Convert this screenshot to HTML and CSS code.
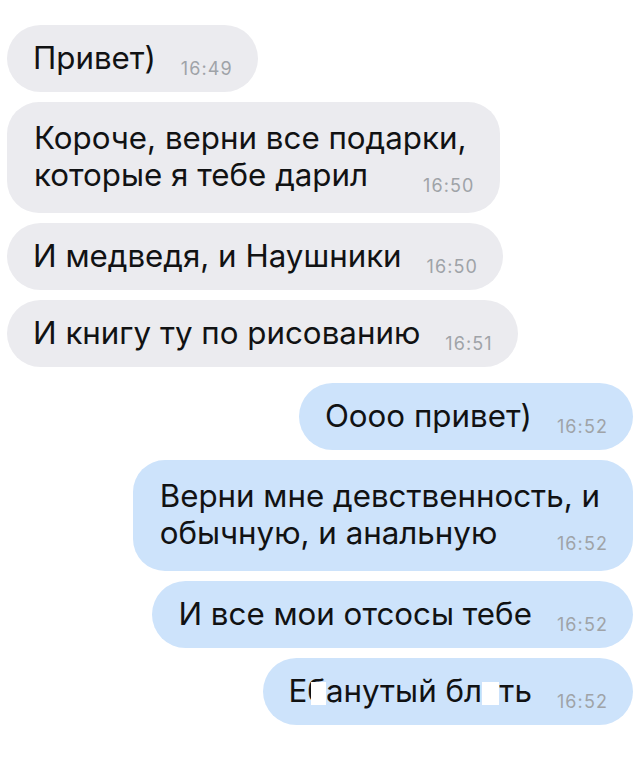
FILE: index.html
```html
<!DOCTYPE html>
<html lang="ru">
<head>
  <meta charset="UTF-8">
  <meta name="viewport" content="width=device-width, initial-scale=1.0">
  <title>Диалог</title>
  <link rel="stylesheet" href="styles.css">
</head>
<body>
  <div class="chat">
    <div class="msg in">
      <span class="text">Привет)</span>
      <span class="time">16:49</span>
    </div>
    <div class="msg in multi">
      <div class="text">Короче, верни все подарки,</div>
      <div class="last">
        <span class="text">которые я тебе дарил</span>
        <span class="time">16:50</span>
      </div>
    </div>
    <div class="msg in">
      <span class="text">И медведя, и Наушники</span>
      <span class="time">16:50</span>
    </div>
    <div class="msg in">
      <span class="text">И книгу ту по рисованию</span>
      <span class="time">16:51</span>
    </div>

    <div class="msg out first">
      <span class="text">Оооо привет)</span>
      <span class="time">16:52</span>
    </div>
    <div class="msg out multi">
      <div class="text">Верни мне девственность, и</div>
      <div class="last">
        <span class="text">обычную, и анальную</span>
        <span class="time">16:52</span>
      </div>
    </div>
    <div class="msg out">
      <span class="text">И все мои отсосы тебе</span>
      <span class="time">16:52</span>
    </div>
    <div class="msg out">
      <span class="text">Е<span class="censor">б</span>анутый бл<span class="censor full">я</span>ть</span>
      <span class="time">16:52</span>
    </div>
  </div>
</body>
</html>
```

FILE: styles.css
```css
body {
  margin: 0;
  background: #ffffff;
  font-family: Inter, "Liberation Sans", Arial, sans-serif;
  color: #111213;
}
.chat {
  display: flex;
  flex-direction: column;
  gap: 10px;
  padding: 25px 7px;
}
.msg {
  display: flex;
  align-items: baseline;
  gap: 25px;
  padding: 15px 25px 15px 26px;
  border-radius: 34px;
  font-size: 31.3px;
  line-height: 37px;
}
.msg.multi {
  display: block;
  border-radius: 32px;
  padding: 18px 33px 19px 27px;
}
.msg.multi .time {
  margin-right: -8px;
}
.msg.first {
  margin-top: 6px;
}
.last {
  display: flex;
  align-items: baseline;
  justify-content: space-between;
  gap: 26px;
}
.in {
  align-self: flex-start;
  background: #ebebef;
}
.out {
  align-self: flex-end;
  background: #cde3fb;
}
.time {
  font-size: 18px;
  line-height: 18px;
  letter-spacing: 1.1px;
  color: #9fa3a8;
  position: relative;
  top: 6px;
}
.censor {
  position: relative;
}
.censor::after {
  content: "";
  position: absolute;
  left: 4px;
  right: 0;
  top: 10px;
  height: 23px;
  background: #ffffff;
}
.censor.full::after {
  left: 0;
}
```
